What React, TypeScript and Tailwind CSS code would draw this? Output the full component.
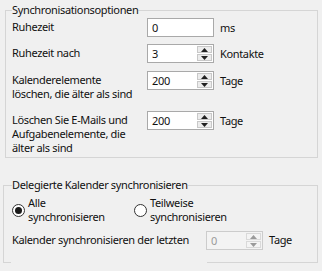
import React from 'react'

const font = "font-['Noto_Sans',sans-serif] text-[11px] tracking-[-0.35px] text-[#111]"

function SpinArrows({ disabled = false }: { disabled?: boolean }) {
  const c = disabled ? '#9a9a9a' : '#202020'
  const btn = disabled ? 'border-[#d9d9d9] bg-[#f4f4f4]' : 'border-[#c8c8c8] bg-[#ececec]'
  return (
    <div className="flex flex-col w-[16px] h-full py-[1px] pr-[1px] gap-[1px]">
      <div className={`flex-1 flex items-center justify-center border ${btn}`}>
        <svg width="7" height="4" viewBox="0 0 7 4"><path d="M0 4 L3.5 0 L7 4 Z" fill={c} /></svg>
      </div>
      <div className={`flex-1 flex items-center justify-center border ${btn}`}>
        <svg width="7" height="4" viewBox="0 0 7 4"><path d="M0 0 L7 0 L3.5 4 Z" fill={c} /></svg>
      </div>
    </div>
  )
}

function Spinner({ value, width = 67, disabled = false }: { value: string; width?: number; disabled?: boolean }) {
  return (
    <div
      className={`flex items-stretch h-[19px] border ${disabled ? 'border-[#cccccc] bg-[#f3f3f3] text-[#9a9a9a]' : 'border-[#a9a9a9] bg-white'}`}
      style={{ width }}
    >
      <span className="flex-1 pl-[4px] leading-[17px]">{value}</span>
      <SpinArrows disabled={disabled} />
    </div>
  )
}

function Row({ label, children, unit, top }: { label: React.ReactNode; children: React.ReactNode; unit: string; top: string }) {
  return (
    <div className={`flex items-start ${top}`}>
      <div className="w-[135px] pt-[2px] leading-[14px]">{label}</div>
      {children}
      <span className="ml-[6px] leading-[19px]">{unit}</span>
    </div>
  )
}

function Radio({ checked }: { checked?: boolean }) {
  return (
    <span className="w-[13px] h-[13px] rounded-full border border-[#333] bg-white flex items-center justify-center shrink-0">
      {checked && <span className="w-[7px] h-[7px] rounded-full bg-[#1a1a1a]" />}
    </span>
  )
}

export default function App() {
  return (
    <div className={`w-[322px] h-[271px] bg-[#f0f0f0] ${font} overflow-hidden`}>
      {/* Synchronisationsoptionen */}
      <fieldset className="ml-[5px] mt-[3px] w-[313px] h-[155px] border border-[#d5d5d5] px-[6px]">
        <legend className="leading-[14px] px-0">Synchronisationsoptionen</legend>
        <Row label="Ruhezeit" unit="ms" top="mt-[1px]">
          <div className="w-[67px] h-[19px] border border-[#a9a9a9] bg-white pl-[4px] leading-[17px]">0</div>
        </Row>
        <Row label="Ruhezeit nach" unit="Kontakte" top="mt-[7px]">
          <Spinner value="3" />
        </Row>
        <Row label={<>Kalenderelemente<br />löschen, die älter als sind</>} unit="Tage" top="mt-[8px]">
          <Spinner value="200" />
        </Row>
        <Row label={<>Löschen Sie E-Mails und<br />Aufgabenelemente, die<br />älter als sind</>} unit="Tage" top="mt-[10px]">
          <Spinner value="200" />
        </Row>
      </fieldset>

      {/* Delegierte Kalender synchronisieren */}
      <fieldset className="ml-[3px] mt-[20px] w-[315px] h-[85px] border border-[#d5d5d5] border-b-0 px-[8px]">
        <legend className="leading-[14px] px-0">Delegierte Kalender synchronisieren</legend>
        <div className="flex mt-[4px]">
          <div className="flex items-center w-[122px]">
            <Radio checked />
            <span className="ml-[3px] leading-[14px]">Alle<br />synchronisieren</span>
          </div>
          <div className="flex items-center">
            <Radio />
            <span className="ml-[3px] leading-[14px]">Teilweise<br />synchronisieren</span>
          </div>
        </div>
        <div className="flex items-center mt-[7px]">
          <span className="w-[194px]">Kalender synchronisieren der letzten</span>
          <Spinner value="0" width={57} disabled />
          <span className="ml-[6px]">Tage</span>
        </div>
        {/* bottom edge, partly hidden behind the label in the original */}
        <div className="flex -mx-[9px] mt-[12px] h-px">
          <div className="w-[8px] bg-[#d5d5d5]" />
          <div className="w-[196px]" />
          <div className="flex-1 bg-[#d5d5d5]" />
        </div>
      </fieldset>
    </div>
  )
}
